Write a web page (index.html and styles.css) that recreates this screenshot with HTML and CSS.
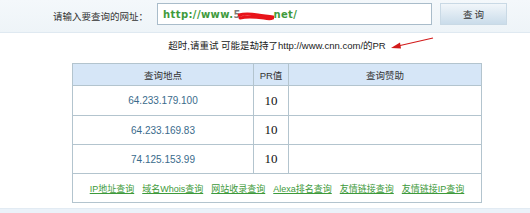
FILE: index.html
```html
<!DOCTYPE html>
<html>
<head>
<meta charset="utf-8">
<link rel="stylesheet" href="styles.css">
</head>
<body>
<div class="topbar">
  <span class="label">请输入要查询的网址：</span>
  <div class="urlbox">
    <span class="url">http://www.<span class="hidden">5<svg class="scribble" width="36" height="12" viewBox="0 0 36 12"><path d="M1 5 C8 3 14 4 20 5 C26 6 30 6 35 7 M2 8 C10 6 18 7 26 8 C30 9 33 9 35 8" stroke="#e8141a" stroke-width="3" fill="none" stroke-linecap="round"/></svg></span>net/</span>
  </div>
  <button class="btn">查 询</button>
</div>
<div class="content">
  <div class="msg">超时,请重试 可能是劫持了http://www.cnn.com/的PR
    <svg class="arrow" width="44" height="14" viewBox="0 0 44 14"><path d="M43 1 L8 9" stroke="#d21a1a" stroke-width="1.2" fill="none"/><path d="M1 11 L10 5.5 L11 11.5 Z" fill="#d21a1a"/></svg>
  </div>
  <table class="pr">
    <tr class="head"><th class="c1">查询地点</th><th class="c2">PR值</th><th class="c3">查询赞助</th></tr>
    <tr class="r1"><td class="ip">64.233.179.100</td><td class="val">10</td><td></td></tr>
    <tr class="r2"><td class="ip">64.233.169.83</td><td class="val">10</td><td></td></tr>
    <tr class="r3"><td class="ip">74.125.153.99</td><td class="val">10</td><td></td></tr>
    <tr class="links"><td colspan="3"><div class="linkrow">
      <a href="#">IP地址查询</a><a href="#">域名Whois查询</a><a href="#">网站收录查询</a><a href="#">Alexa排名查询</a><a href="#">友情链接查询</a><a href="#">友情链接IP查询</a>
    </div></td></tr>
  </table>
</div>
<div class="bottombar"></div>
</body>
</html>
```
FILE: styles.css
```css
html, body { margin: 0; padding: 0; background: #fff; }
body {
  width: 530px; height: 213px; overflow: hidden;
  font-family: "Liberation Sans", "Noto Sans CJK SC", sans-serif;
  font-size: 9.5px; color: #333;
}
.topbar {
  height: 32px;
  border-bottom: 1px solid #dfe9f1;
  background: linear-gradient(#f4f8fb, #eef4f8);
  display: flex; align-items: center;
  padding-left: 53px;
  box-sizing: content-box;
}
.label { font-size: 9.5px; color: #333; width: 104px; }
.urlbox {
  width: 268px; height: 20px;
  border: 1px solid #a9bcca;
  background: #fff;
  display: flex; align-items: center;
  padding-left: 5px; box-sizing: content-box;
  margin-top: -4px;
}
.url {
  font-family: "DejaVu Sans", sans-serif; font-weight: bold;
  font-size: 10px; color: #3f9a3c; letter-spacing: 0.4px;
  white-space: nowrap;
}
.hidden { position: relative; display: inline-block; width: 40px; color: #7a7a7a; }
.scribble { position: absolute; left: 5px; top: 1px; }
.btn {
  margin-left: 8px; margin-top: -4px;
  width: 67px; height: 22px;
  border: 1px solid #c9d9e5;
  background: linear-gradient(#f1f6fa, #cadcea);
  font-family: "Noto Sans CJK SC", sans-serif;
  font-size: 9.5px; color: #333; padding: 0;
}
.content { margin-left: 72px; width: 410px; }
.msg {
  position: relative;
  height: 30px; line-height: 26px;
  text-align: center; color: #222; white-space: nowrap;
}
.arrow { position: absolute; left: 318px; top: 4px; }
.pr {
  width: 410px; border-collapse: collapse;
  border: 1px solid #a9bcc8;
}
.pr th, .pr td { border: 1px solid #b3c4ce; padding: 0; text-align: center; }
.head th { background: #d6e6f7; height: 21px; font-weight: normal; color: #333; }
.c1 { width: 180px; }
.c2 { width: 34px; }
.r1 td { height: 29px; }
.r2 td { height: 28px; }
.r3 td { height: 28px; }
.ip { color: #3a6b8c; font-size: 10px; }
.val { font-family: "Liberation Serif", serif; font-size: 13px; color: #111; }
.links td { height: 28px; }
.linkrow { display: flex; justify-content: center; gap: 8px; }
.linkrow a { color: #3d9a3a; text-decoration: underline; font-size: 9px; }
.bottombar { margin-top: 5px; height: 10px; background: #ebf2f9; border-top: 1px solid #e2ebf3; }
```
